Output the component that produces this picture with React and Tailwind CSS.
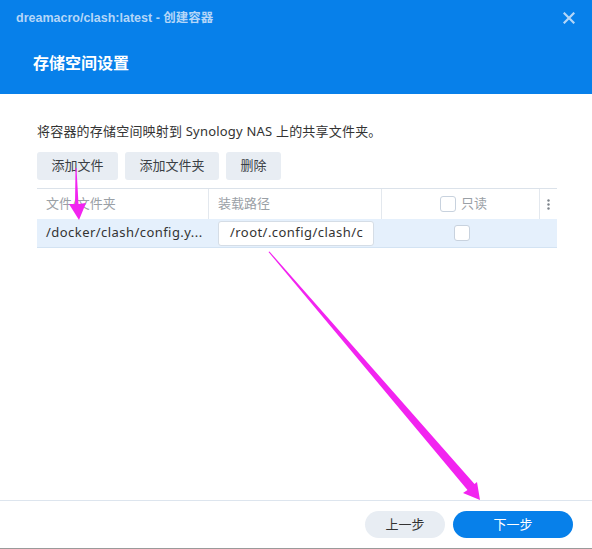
import React from "react";

const font = { fontFamily: '"Noto Sans", "Noto Sans CJK SC", sans-serif' };
const titleFont = { fontFamily: '"Liberation Sans", "Noto Sans CJK SC", sans-serif' };

function Checkbox({ className = "" }) {
  return (
    <span
      className={
        "inline-block w-[16px] h-[16px] rounded-[3px] border border-[#c8d2de] bg-white " +
        className
      }
    />
  );
}

function ToolButton({ children, w }) {
  return (
    <button
      className={
        "h-[28px] rounded-[3px] bg-[#e8edf3] text-[13px] text-[#3a3f45] flex items-center justify-center " +
        w
      }
    >
      {children}
    </button>
  );
}

export default function App() {
  return (
    <div
      className="relative w-[592px] h-[549px] bg-white overflow-hidden flex flex-col border-b border-[#9a9a9a]"
      style={font}
    >
      {/* dialog header */}
      <div className="h-[94px] bg-[#0780ea] flex flex-col shrink-0">
        <div className="h-[36px] flex items-center justify-between pl-[16px] pr-[16px]">
          <span className="text-[12.5px] font-bold text-[#b4d6f8]" style={titleFont}>
            dreamacro/clash:latest - 创建容器
          </span>
          <svg width="12" height="12" viewBox="0 0 12 12" className="mr-[1px]">
            <path
              d="M1.5 1.5 L10.5 10.5 M10.5 1.5 L1.5 10.5"
              stroke="#b4d6f8"
              strokeWidth="2.2"
              strokeLinecap="square"
            />
          </svg>
        </div>
        <div className="pl-[33px] pt-[19px] text-[16px] font-semibold text-white leading-none">
          存储空间设置
        </div>
      </div>

      {/* body */}
      <div className="flex-1 px-[37px] pt-[27px] text-[#333]">
        <p className="text-[13px] leading-[20px] tracking-[0.2px]">
          将容器的存储空间映射到 Synology NAS 上的共享文件夹。
        </p>
        <div className="mt-[11px] flex gap-[7px]">
          <ToolButton w="w-[81px]">添加文件</ToolButton>
          <ToolButton w="w-[94px]">添加文件夹</ToolButton>
          <ToolButton w="w-[55px]">删除</ToolButton>
        </div>

        {/* volume table */}
        <div className="mt-[8px] w-[520px] border-t border-[#dbe2ea]">
          <div className="h-[30px] flex text-[13px] text-[#9aa0a6]">
            <div className="w-[172px] border-r border-[#e3e8ee] pl-[9px] flex items-center">
              文件/文件夹
            </div>
            <div className="w-[173px] border-r border-[#e3e8ee] pl-[9px] flex items-center">
              装载路径
            </div>
            <div className="w-[158px] border-r border-[#e3e8ee] flex items-center justify-center gap-[5px]">
              <Checkbox className="ml-[6px]" />
              <span>只读</span>
            </div>
            <div className="flex-1 flex items-center justify-center">
              <svg width="3" height="11" viewBox="0 0 3 11">
                <circle cx="1.5" cy="1.5" r="1.2" fill="#7d848b" />
                <circle cx="1.5" cy="5.5" r="1.2" fill="#7d848b" />
                <circle cx="1.5" cy="9.5" r="1.2" fill="#7d848b" />
              </svg>
            </div>
          </div>
          <div className="h-[29px] flex bg-[#e5f0fc] border-b border-[#d3e3f3] text-[13px] text-[#333]">
            <div className="w-[172px] pl-[9px] flex items-center whitespace-nowrap tracking-[0.45px]">
              /docker/clash/config.y...
            </div>
            <div className="w-[173px] pl-[9px] flex items-center">
              <div className="w-[156px] h-[25px] bg-white border border-[#d5dde6] rounded-[3px] pl-[11px] flex items-center overflow-hidden whitespace-nowrap tracking-[0.45px]">
                /root/.config/clash/c
              </div>
            </div>
            <div className="w-[158px] flex items-center justify-center">
              <Checkbox className="ml-[1px]" />
            </div>
          </div>
        </div>
      </div>

      {/* footer */}
      <div className="h-[48px] border-t border-[#dde5ee] flex items-center justify-end gap-[8px] pr-[19px] shrink-0">
        <button className="w-[80px] h-[27px] rounded-full bg-[#e8edf3] text-[13px] text-[#333]">
          上一步
        </button>
        <button className="w-[120px] h-[27px] rounded-full bg-[#0780ea] text-[13px] text-white">
          下一步
        </button>
      </div>

      {/* annotation arrows */}
      <svg
        className="absolute left-0 top-0 pointer-events-none"
        width="592"
        height="549"
        viewBox="0 0 592 549"
      >
        <polygon
          points="75.5,168 76.5,168 78.5,204 86,203 79,220 69,204 75,204"
          fill="#f224f0"
        />
        <polygon
          points="268.5,252 269.5,251.5 474.5,484 477,482 480,500 463,493 467.5,490"
          fill="#f224f0"
        />
      </svg>
    </div>
  );
}
